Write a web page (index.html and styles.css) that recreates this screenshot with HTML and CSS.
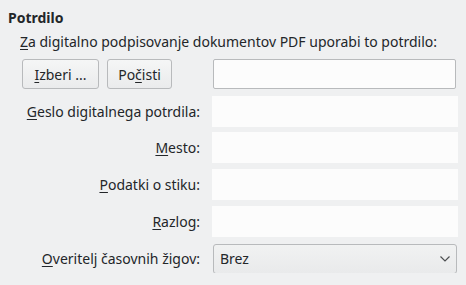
FILE: index.html
```html
<!DOCTYPE html>
<html lang="sl">
<head>
    <meta charset="UTF-8">
    <title>Potrdilo</title>
    <link rel="stylesheet" href="styles.css">
</head>
<body>
    <div class="panel">
        <h2 class="panel-title">Potrdilo</h2>
        <p class="panel-intro"><u>Z</u>a digitalno podpisovanje dokumentov PDF uporabi to potrdilo:</p>

        <div class="form-grid">
            <div class="cert-buttons">
                <button class="btn btn-select"><u>I</u>zberi ...</button>
                <button class="btn btn-clear">Po<u>č</u>isti</button>
            </div>
            <div class="field field-bordered"></div>

            <label class="field-label"><u>G</u>eslo digitalnega potrdila:</label>
            <div class="field"></div>

            <label class="field-label"><u>M</u>esto:</label>
            <div class="field"></div>

            <label class="field-label"><u>P</u>odatki o stiku:</label>
            <div class="field"></div>

            <label class="field-label"><u>R</u>azlog:</label>
            <div class="field"></div>

            <label class="field-label field-label-select"><u>O</u>veritelj časovnih žigov:</label>
            <div class="select">
                <span>Brez</span>
                <svg class="select-arrow" width="10" height="6" viewBox="0 0 10 6">
                    <path d="M0.5 0.5 L5 5 L9.5 0.5" fill="none" stroke="#4d4f51" stroke-width="1.2"/>
                </svg>
            </div>
        </div>
    </div>
</body>
</html>
```

FILE: styles.css
```css
:root {
    --color-bg: #eff0f1;
    --color-text: #232629;
    --color-field: #fcfcfc;
    --color-border: #b8babc;
}

* {
    margin: 0;
    padding: 0;
    box-sizing: border-box;
}

body {
    font-family: "Noto Sans", "DejaVu Sans", sans-serif;
    font-size: 14px;
    line-height: 19px;
    background: var(--color-bg);
    color: var(--color-text);
}

u {
    text-decoration: underline;
    text-underline-offset: 2px;
}

.panel {
    padding: 8px 8px 0 8px;
}

.panel-title {
    font-size: 14px;
    font-weight: bold;
    line-height: 19px;
}

.panel-intro {
    margin-top: 5px;
    padding-left: 12px;
}

.form-grid {
    display: grid;
    grid-template-columns: 180px 246px;
    grid-template-rows: 30px repeat(4, 31px) 30px;
    column-gap: 12px;
    row-gap: 6px;
    margin-top: 8px;
    padding-left: 12px;
    align-items: center;
}

.cert-buttons {
    display: flex;
    gap: 8px;
    padding-left: 2px;
}

.btn {
    font: inherit;
    color: var(--color-text);
    height: 30px;
    line-height: 19px;
    padding: 0;
    white-space: nowrap;
    text-align: center;
    border: 1px solid var(--color-border);
    border-radius: 3px;
    background: linear-gradient(#f5f6f6, #eaebec);
}

.btn-select {
    width: 77px;
}

.btn-clear {
    width: 65px;
}

.field {
    height: 31px;
    background: var(--color-field);
}

.field-bordered {
    height: 30px;
    margin: 0 2px 0 1px;
    border: 1px solid var(--color-border);
    border-radius: 2px;
}

.form-grid .field-bordered + .field-label,
.form-grid .field-bordered + .field-label + .field {
    margin-top: 2px;
}

.field-label {
    text-align: right;
}

.field-label-select,
.select {
    margin-top: 1px;
}

.select {
    height: 30px;
    margin-left: 1px;
    margin-right: 1px;
    padding: 0 6px 0 6px;
    display: flex;
    align-items: center;
    justify-content: space-between;
    border: 1px solid var(--color-border);
    border-radius: 3px;
    background: linear-gradient(#f1f2f2, #e9eaeb);
}
```
